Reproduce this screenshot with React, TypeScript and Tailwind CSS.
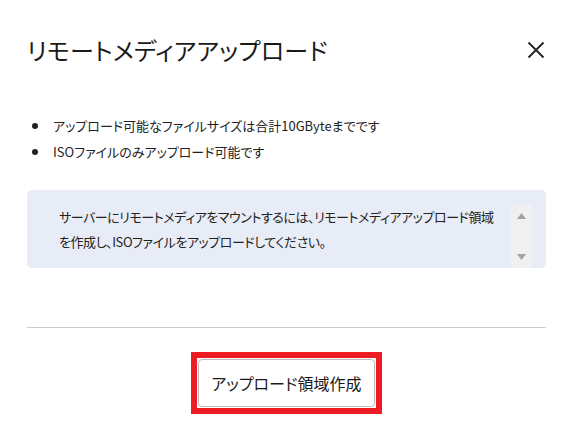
import React from 'react';

const jp = "font-['Noto_Sans_CJK_JP',sans-serif] [font-feature-settings:'palt']";

const UploadDialog = (): JSX.Element => {
  return (
    <div className={`w-[573px] h-[440px] bg-white text-[#222] ${jp}`}>
      <div className="px-[27px]">
        {/* header */}
        <div className="flex items-center justify-between h-[100px]">
          <h2 className="text-[24px] leading-none tracking-[0.3px] text-[#1a1a1a]">リモートメディアアップロード</h2>
          <button className="w-[24px] h-[24px] flex items-center justify-center mr-[-2px]">
            <svg width="20" height="20" viewBox="0 0 20 20">
              <path d="M2.5 2.5 L17.5 17.5 M17.5 2.5 L2.5 17.5" stroke="#222" strokeWidth="1.8" />
            </svg>
          </button>
        </div>

        {/* notes */}
        <ul className="mt-[13px] text-[13px] leading-[26px] text-[#222]">
          <li className="flex items-center">
            <span className="w-[6px] h-[6px] rounded-full bg-[#222] ml-[5px] mr-[15px]"></span>
            アップロード可能なファイルサイズは合計10GByteまでです
          </li>
          <li className="flex items-center">
            <span className="w-[6px] h-[6px] rounded-full bg-[#222] ml-[5px] mr-[15px]"></span>
            ISOファイルのみアップロード可能です
          </li>
        </ul>

        {/* info box */}
        <div className="mt-[25px] h-[78px] bg-[#e8ecf6] rounded-[5px] pt-[15px] pr-[14px] flex overflow-hidden">
          <div className="flex-1 pl-[32px] text-[13px] leading-[25px] tracking-[-0.45px] text-[#222] mt-[-1px]">
            <p className="whitespace-nowrap">サーバーにリモートメディアをマウントするには、リモートメディアアップロード領域</p>
            <p className="whitespace-nowrap">を作成し、ISOファイルをアップロードしてください。</p>
          </div>
          <div className="w-[21px] bg-[#f0f0f0] flex flex-col items-center justify-between pt-[8px] pb-[8px]">
            <svg width="9" height="6" viewBox="0 0 9 6"><path d="M0 6 L4.5 0 L9 6 Z" fill="#a3a3a3" /></svg>
            <svg width="9" height="6" viewBox="0 0 9 6"><path d="M0 0 L4.5 6 L9 0 Z" fill="#a3a3a3" /></svg>
          </div>
        </div>

        <hr className="mt-[59px] border-0 h-px bg-[#cccccc]" />

        {/* action */}
        <div className="flex justify-center mt-[24px]">
          <div className="border-[6px] border-[#ed1c24] bg-white p-px">
            <button className="w-[177px] h-[48px] bg-white border border-solid border-[#bdbdbd] rounded-[4px] text-[16px] text-[#1a1a1a]">
              アップロード領域作成
            </button>
          </div>
        </div>
      </div>
    </div>
  );
};

export default function App(): JSX.Element {
  return <UploadDialog />;
}
